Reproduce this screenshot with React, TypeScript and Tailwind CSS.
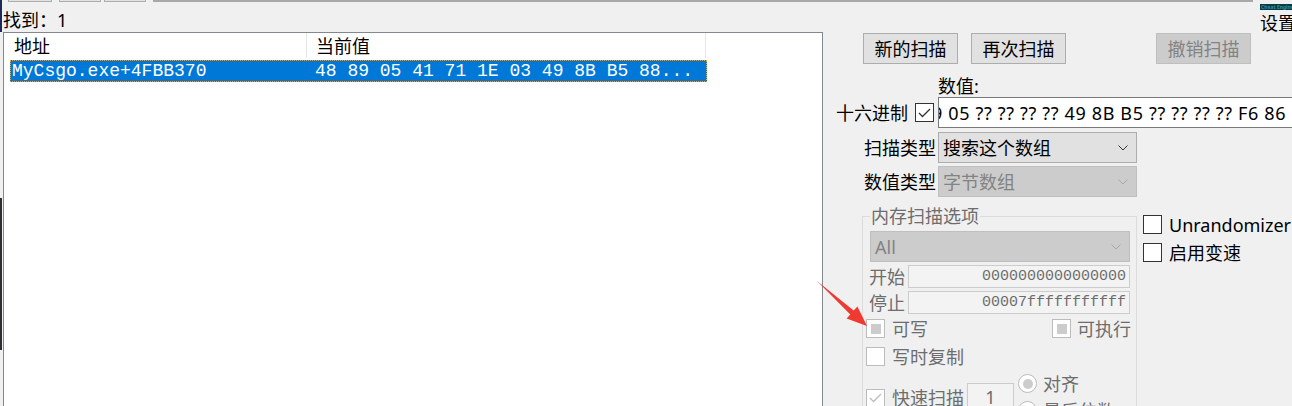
import React from "react";

const ui = "font-['Noto_Sans','Noto_Sans_CJK_SC',sans-serif]";
const mono = "font-['Liberation_Mono','Courier_New',monospace]";

type BoxState = "off" | "on" | "mixed";

function CheckBox({ state = "off", disabled = false }: { state?: BoxState; disabled?: boolean }) {
    return (
        <div
            className={`flex items-center justify-center w-[19px] h-[19px] shrink-0 bg-white border ${disabled ? "border-[#bcbcbc]" : "border-[#333333]"}`}
        >
            {state === "on" && (
                <svg width="13" height="10" viewBox="0 0 13 10">
                    <path d="M1 5 L4.5 8.5 L12 1" fill="none" stroke={disabled ? "#bcbcbc" : "#333333"} strokeWidth="1.3" />
                </svg>
            )}
            {state === "mixed" && <div className="w-[10px] h-[10px] bg-[#cccccc]" />}
        </div>
    );
}

function Radio() {
    return (
        <div className="flex items-center justify-center w-[19px] h-[19px] shrink-0 rounded-full bg-white border border-[#bcbcbc]">
            <div className="w-[10px] h-[10px] rounded-full bg-[#cccccc]" />
        </div>
    );
}

function Chevron({ color }: { color: string }) {
    return (
        <svg width="10" height="6" viewBox="0 0 10 6" className="shrink-0">
            <path d="M0.5 0.5 L5 5 L9.5 0.5" fill="none" stroke={color} strokeWidth="1" />
        </svg>
    );
}

function Button({ label, disabled = false }: { label: string; disabled?: boolean }) {
    return (
        <div
            className={`flex items-center justify-center w-[95px] h-[31px] shrink-0 border ${disabled ? "bg-[#cccccc] border-[#bfbfbf] text-[#838383]" : "bg-[#e1e1e1] border-[#adadad]"}`}
        >
            {label}
        </div>
    );
}

function Select({ label, disabled = false, className = "" }: { label: string; disabled?: boolean; className?: string }) {
    return (
        <div
            className={`flex items-center justify-between h-[31px] shrink-0 border pl-[4px] pr-[8px] ${disabled ? "bg-[#cccccc] border-[#bfbfbf] text-[#838383]" : "bg-[#e1e1e1] border-[#adadad]"} ${className}`}
        >
            <span className="whitespace-nowrap">{label}</span>
            <Chevron color={disabled ? "#a8a8a8" : "#333333"} />
        </div>
    );
}

function AddrField({ label, value }: { label: string; value: string }) {
    return (
        <div className="flex items-center h-[23px] mt-[3px]">
            <span className="w-[42px] shrink-0 pl-[3px] text-[#6d6d6d] whitespace-nowrap">{label}</span>
            <div className={`flex-1 h-[23px] flex items-center justify-end pr-[3px] bg-[#f3f3f3] border border-[#cccccc] text-[15px] text-[#6d6d6d] ${mono}`}>
                {value}
            </div>
        </div>
    );
}

function TopStrip() {
    return (
        <div className="flex h-[3px] items-start">
            <div className="w-[2px] h-[3px] bg-[#1c2a55]" />
            <div className="w-[6px]" />
            <div className="w-[44px] h-[2px] bg-[#e1e1e1] border-x border-b border-[#adadad]" />
            <div className="w-[7px]" />
            <div className="w-[42px] h-[2px] bg-[#e1e1e1] border-x border-b border-[#adadad]" />
            <div className="w-[3px]" />
            <div className="w-[42px] h-[2px] bg-[#e1e1e1] border-x border-b border-[#adadad]" />
            <div className="w-[7px]" />
            <div className="w-[1100px] h-[2px] bg-[#a8a8a8]" />
        </div>
    );
}

function ResultList() {
    return (
        <div className="flex-1 flex flex-col bg-white border-l border-t border-r border-[#828790]">
            <div className="flex h-[27px]">
                <div className="w-[303px] h-[25px] flex items-center pl-[10px] border-r border-[#e5e5e5]">地址</div>
                <div className="w-[399px] h-[25px] flex items-center pl-[9px] border-r border-[#e5e5e5]">当前值</div>
            </div>
            <div
                className={`ml-[6px] w-[697px] h-[22px] flex items-center bg-[#0078d7] text-white text-[18px] outline-1 outline-dotted outline-[#e8a13a] -outline-offset-1 ${mono}`}
            >
                <span className="w-[305px] pl-[2px]">MyCsgo.exe+4FBB370</span>
                <span>48 89 05 41 71 1E 03 49 8B B5 88...</span>
            </div>
        </div>
    );
}

function ScanPanel() {
    return (
        <div className="flex-1 flex flex-col min-w-0">
            <div className="h-[30px] flex justify-end">
                <div className="w-[32px] flex flex-col overflow-hidden">
                    <div className="h-[9px] flex items-end">
                        <span className="text-[5px] leading-[6px] font-bold text-[#2a8fa0] bg-[#0d3b44] px-px whitespace-nowrap">Cheat Engine</span>
                    </div>
                    <span className="whitespace-nowrap mt-[3px]">设置</span>
                </div>
            </div>

            <div className="flex h-[31px] pl-[40px]">
                <Button label="新的扫描" />
                <div className="w-[13px] shrink-0" />
                <Button label="再次扫描" />
                <div className="w-[90px] shrink-0" />
                <Button label="撤销扫描" disabled />
            </div>

            <div className="mt-[11px] h-[22px] pl-[115px] leading-[22px]">数值:</div>

            <div className="flex items-center h-[31px]">
                <span className="ml-[13px] w-[79px] shrink-0 whitespace-nowrap">十六进制</span>
                <CheckBox state="on" />
                <div className="ml-[4px] w-[360px] h-[31px] shrink-0 flex items-center bg-white border border-[#7a7a7a] overflow-hidden whitespace-nowrap">
                    <span className="ml-[-18px] tracking-[0.65px]">89 05 ?? ?? ?? ?? 49 8B B5 ?? ?? ?? ?? F6 86</span>
                </div>
            </div>

            <div className="flex items-center mt-[4px]">
                <span className="ml-[41px] w-[74px] shrink-0 whitespace-nowrap">扫描类型</span>
                <Select label="搜索这个数组" className="w-[199px]" />
            </div>
            <div className="flex items-center mt-[3px]">
                <span className="ml-[41px] w-[74px] shrink-0 whitespace-nowrap">数值类型</span>
                <Select label="字节数组" disabled className="w-[199px]" />
            </div>

            <div className="flex items-start pl-[39px]">
                <div className="relative shrink-0 mt-[19px] w-[275px] h-[200px] border border-[#dcdcdc] pl-[3px] pr-[6px] pt-[14px]">
                    <span className="absolute left-[7px] top-[-11px] px-[1px] bg-[#f0f0f0] text-[#6d6d6d] leading-[20px] whitespace-nowrap">内存扫描选项</span>
                    <Select label="All" disabled className="ml-[4px] text-[#6d6d6d]" />
                    <AddrField label="开始" value="0000000000000000" />
                    <AddrField label="停止" value="00007fffffffffff" />
                    <div className="flex items-center h-[19px] mt-[5px] text-[#6d6d6d] whitespace-nowrap">
                        <CheckBox state="mixed" disabled />
                        <span className="ml-[7px] w-[160px] shrink-0">可写</span>
                        <CheckBox state="mixed" disabled />
                        <span className="ml-[6px] shrink-0">可执行</span>
                    </div>
                    <div className="flex items-center h-[19px] mt-[9px] text-[#6d6d6d] whitespace-nowrap">
                        <CheckBox disabled />
                        <span className="ml-[7px]">写时复制</span>
                    </div>
                    <div className="flex items-start mt-[8px] text-[#6d6d6d] whitespace-nowrap">
                        <div className="flex items-center mt-[14px] shrink-0">
                            <CheckBox state="on" disabled />
                            <span className="ml-[7px]">快速扫描</span>
                        </div>
                        <div className="ml-[3px] mt-[9px] w-[47px] h-[30px] shrink-0 flex justify-center pt-[3px] bg-[#f3f3f3] border border-[#cccccc]">1</div>
                        <div className="ml-[4px] flex flex-col shrink-0">
                            <div className="flex items-center h-[19px]">
                                <Radio />
                                <span className="ml-[6px]">对齐</span>
                            </div>
                            <div className="flex items-center h-[19px] mt-[8px]">
                                <Radio />
                                <span className="ml-[6px]">最后位数</span>
                            </div>
                        </div>
                    </div>
                </div>

                <div className="ml-[6px] mt-[18px] flex flex-col whitespace-nowrap">
                    <div className="flex items-center h-[19px]">
                        <CheckBox />
                        <span className="ml-[7px]">Unrandomizer</span>
                    </div>
                    <div className="flex items-center h-[19px] mt-[9px]">
                        <CheckBox />
                        <span className="ml-[7px]">启用变速</span>
                    </div>
                </div>
            </div>
        </div>
    );
}

export default function App() {
    return (
        <div className={`relative w-[1292px] h-[406px] overflow-hidden bg-[#f0f0f0] text-black text-[18px] leading-[20px] ${ui}`}>
            <TopStrip />
            <div className="flex h-[403px]">
                <div className="w-[3px] shrink-0 flex flex-col">
                    <div className="w-[2px] h-[29px] bg-[#1c2a55]" />
                    <div className="h-[166px]" />
                    <div className="w-[2px] h-[152px] bg-[#2d2f33]" />
                </div>
                <div className="w-[820px] shrink-0 flex flex-col">
                    <div className="h-[29px] pt-[7px]">找到：1</div>
                    <ResultList />
                </div>
                <ScanPanel />
            </div>

            <svg className="absolute left-0 top-0 pointer-events-none" width="1292" height="406">
                <polygon points="817,281 853.7,310.6 857.4,306.6 867,326 846.6,318.4 850.3,314.4" fill="#ee3a30" />
            </svg>
        </div>
    );
}
